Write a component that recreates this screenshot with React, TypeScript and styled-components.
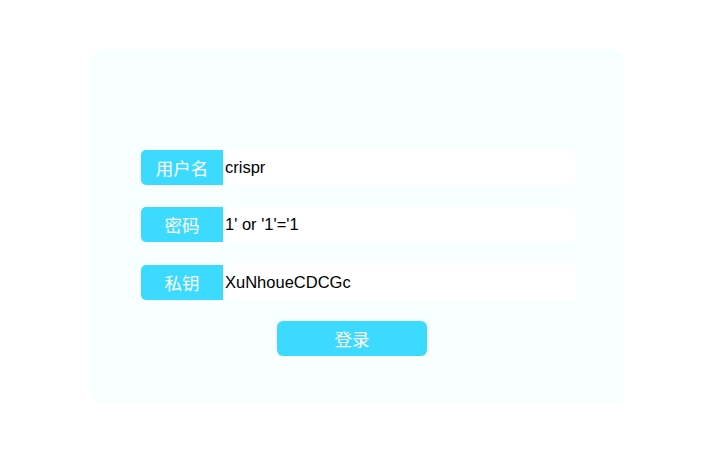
import React from "react";
import styled, { createGlobalStyle } from "styled-components";

const Global = createGlobalStyle`
  html, body { margin: 0; padding: 0; background: #ffffff; }
  body { font-family: "Liberation Sans", Arial, "Noto Sans CJK SC", sans-serif; }
`;

const Page = styled.div`
  width: 716px;
  height: 466px;
  display: flex;
  justify-content: center;
  align-items: flex-start;
  padding-top: 49px;
  box-sizing: border-box;
`;

const Panel = styled.form`
  width: 532px;
  height: 356px;
  box-sizing: border-box;
  background: #f7ffff;
  border-radius: 12px;
  padding: 101px 48px 0 49px;
  display: flex;
  flex-direction: column;
`;

const Row = styled.div<{ $gap: number }>`
  display: flex;
  height: 35px;
  margin-bottom: ${(p) => p.$gap}px;
`;

const Label = styled.label`
  width: 82px;
  flex: none;
  height: 35px;
  background: #3ddaff;
  color: #ffffff;
  border-radius: 5px 0 0 5px;
  display: flex;
  align-items: center;
  justify-content: center;
  font-family: "Noto Sans CJK SC", sans-serif;
  font-size: 17.5px;
`;

const Input = styled.input`
  flex: 1;
  height: 35px;
  box-sizing: border-box;
  border: none;
  outline: none;
  background: #ffffff;
  border-radius: 0 6px 6px 0;
  padding: 0 2px;
  font-family: "Liberation Sans", Arial, sans-serif;
  font-size: 16.5px;
  color: #000000;
`;

const ButtonRow = styled.div`
  display: flex;
  justify-content: center;
  padding-right: 13px;
`;

const Submit = styled.button`
  width: 150px;
  height: 35px;
  border: none;
  border-radius: 6px;
  background: #3ddaff;
  color: #ffffff;
  font-family: "Noto Sans CJK SC", sans-serif;
  font-size: 17.5px;
  padding: 0;
  cursor: pointer;
`;

const fields = [
  { label: "用户名", value: "crispr", gap: 22 },
  { label: "密码", value: "1' or '1'='1", gap: 23 },
  { label: "私钥", value: "XuNhoueCDCGc", gap: 21 },
];

export default function App() {
  return (
    <>
      <Global />
      <Page>
        <Panel onSubmit={(e) => e.preventDefault()}>
          {fields.map((f) => (
            <Row key={f.label} $gap={f.gap}>
              <Label>{f.label}</Label>
              <Input defaultValue={f.value} />
            </Row>
          ))}
          <ButtonRow>
            <Submit type="submit">登录</Submit>
          </ButtonRow>
        </Panel>
      </Page>
    </>
  );
}
